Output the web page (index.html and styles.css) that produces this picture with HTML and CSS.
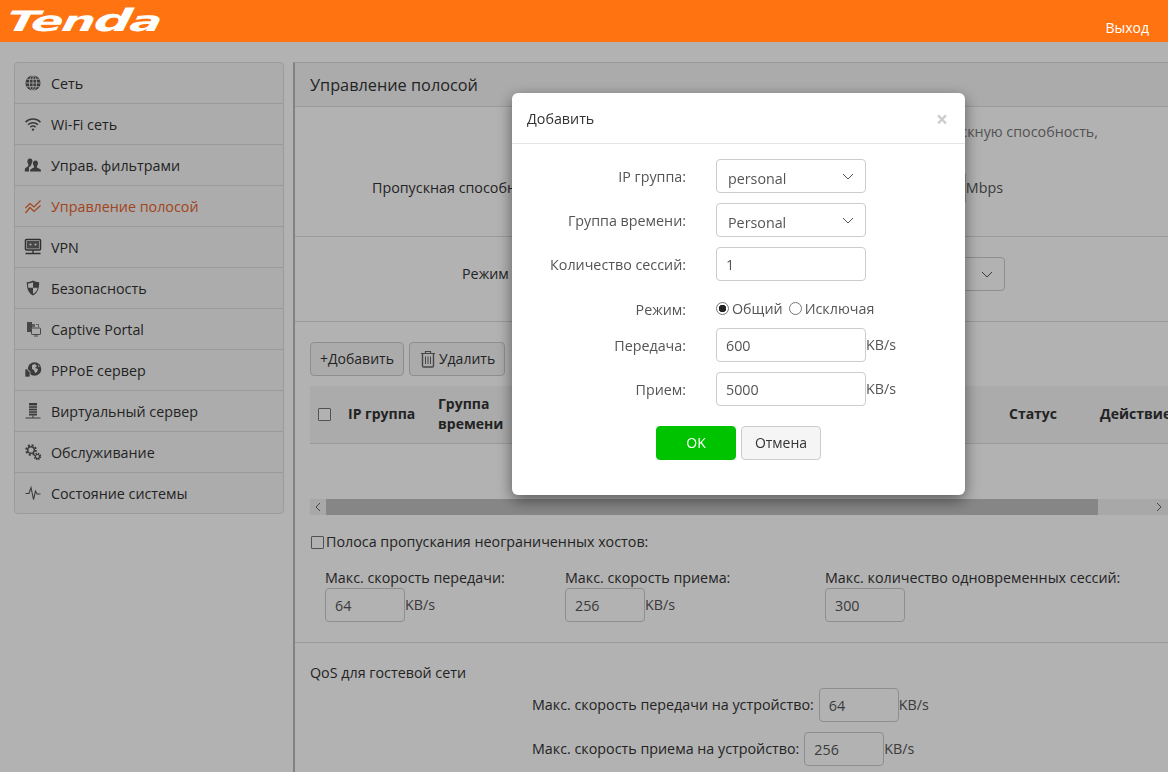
FILE: index.html
```html
<!DOCTYPE html>
<html lang="ru">
<head>
    <meta charset="UTF-8">
    <title>Tenda</title>
    <link rel="stylesheet" href="styles.css">
</head>
<body>
    <header class="top-bar">
        <div class="logo"><span class="logo-t">T</span>en<span class="logo-d">d</span>a</div>
        <a class="logout">Выход</a>
    </header>

    <div class="page">
        <nav class="side-nav">
            <a class="nav-item">
                <svg class="nav-icon" viewBox="0 0 18 18"><circle cx="9" cy="9" r="7.6" fill="#555"/><g fill="none" stroke="#f7f7f7" stroke-width=".8"><ellipse cx="9" cy="9" rx="3.6" ry="7.6"/><path d="M9 1.4v15.2M1.4 9h15.2M2.6 5.3h12.8M2.6 12.7h12.8"/></g></svg>
                Сеть
            </a>
            <a class="nav-item">
                <svg class="nav-icon" viewBox="0 0 18 18"><g fill="none" stroke="#555" stroke-width="1.5"><path d="M1.5 7.2a10.6 10.6 0 0 1 15 0"/><path d="M4 9.8a7 7 0 0 1 10 0"/><path d="M6.3 12.2a3.7 3.7 0 0 1 5.4 0"/></g><circle cx="9" cy="14.6" r="1.2" fill="#555"/></svg>
                Wi-Fi сеть
            </a>
            <a class="nav-item">
                <svg class="nav-icon" viewBox="0 0 18 18"><path fill="#555" d="M6 2.5c1.700 0 2.600 1.300 2.400 3-.1 1.200-.6 2.200-1.200 2.800v1.200L5 11.200 5 15.500H.8v-2.300c0-1.300 2.600-2.400 3.500-3.200V8.300C3.700 7.700 3.400 6.700 3.400 5.500c0-1.700 1-3 2.600-3z"/><path fill="#555" d="M11.500 4.500c1.800 0 2.700 1.400 2.500 3.100-.1 1.200-.6 2.100-1.100 2.700v1.300c1 .8 4.100 1.400 4.100 2.900v1h-11v-1c0-1.500 3-2.100 4-2.900v-1.300C9.500 9.700 9 8.800 8.900 7.600 8.700 5.900 9.700 4.500 11.500 4.500z"/></svg>
                Управ. фильтрами
            </a>
            <a class="nav-item is-active">
                <svg class="nav-icon" viewBox="0 0 18 18"><g fill="none" stroke="#e8622a" stroke-width="1.200"><path d="M1.500 11 6 6.500l4 3.500 6.500-6.500"/><path d="M1.500 16 6 10.500l4 4 6.500-6"/></g></svg>
                Управление полосой
            </a>
            <a class="nav-item">
                <svg class="nav-icon" viewBox="0 0 18 18"><rect x="1.500" y="1.500" width="15" height="10.500" rx="1" fill="none" stroke="#444" stroke-width="1.500"/><rect x="3" y="3" width="12" height="7.500" fill="#666"/><circle cx="6.500" cy="6.500" r="1.100" fill="#f7f7f7"/><circle cx="11.500" cy="6.500" r="1.100" fill="#f7f7f7"/><path d="M9 12v3M1.500 15.500h15" stroke="#444" stroke-width="1.300"/></svg>
                VPN
            </a>
            <a class="nav-item">
                <svg class="nav-icon" viewBox="0 0 18 18"><path fill="#555" d="M9 1.500c2 1.200 4 1.700 6.200 1.700 0 6.200-1.400 10.600-6.200 13.300C4.200 13.800 2.800 9.400 2.800 3.200 5 3.200 7 2.700 9 1.500z"/><path fill="#f7f7f7" d="M9 3.200v5.600H4.300c-.1-1.100-.2-2.200-.2-4.300C5.700 4.400 7.400 4 9 3.200zM9 8.800h4.700c-.5 2.800-2 4.900-4.700 6.200z"/></svg>
                Безопасность
            </a>
            <a class="nav-item">
                <svg class="nav-icon" viewBox="0 0 18 18"><path fill="#666" d="M3 2h5v10H3z"/><path fill="#888" d="M8 4h3v3H8z"/><rect x="7.500" y="8" width="9" height="6.500" rx=".6" fill="#f7f7f7" stroke="#666"/><path d="M10 16h4" stroke="#666"/><path fill="none" stroke="#888" d="M12 4.500h2.500V7"/></svg>
                Captive Portal
            </a>
            <a class="nav-item">
                <svg class="nav-icon" viewBox="0 0 18 18"><circle cx="10.500" cy="8" r="6.800" fill="#555"/><path fill="#f7f7f7" d="M8 4l3-1 2 2-2 2 3 1-1 3-2 1-1-3-2-1zM14 3.500l1.500 2-1 1z"/><path fill="#555" stroke="#f7f7f7" stroke-width=".7" d="M1 8h3v2h2v6H1z"/></svg>
                PPPoE сервер
            </a>
            <a class="nav-item">
                <svg class="nav-icon" viewBox="0 0 18 18"><rect x="5" y="1" width="8" height="12.500" fill="#555"/><path d="M5 3.800h8M5 6.300h8M5 8.800h8M5 11.300h8" stroke="#f7f7f7" stroke-width=".8"/><path d="M9 13.500v2.500M1.500 16h15" stroke="#555" stroke-width="1.100"/></svg>
                Виртуальный сервер
            </a>
            <a class="nav-item">
                <svg class="nav-icon" viewBox="0 0 18 18"><g fill="none" stroke="#555"><circle cx="7" cy="7" r="4.800" stroke-width="2" stroke-dasharray="2 1.770"/><circle cx="7" cy="7" r="3.300" stroke-width="1.500"/><circle cx="13.500" cy="13.500" r="2.900" stroke-width="1.600" stroke-dasharray="1.400 .88"/><circle cx="13.500" cy="13.500" r="2" stroke-width="1.100"/></g></svg>
                Обслуживание
            </a>
            <a class="nav-item">
                <svg class="nav-icon" viewBox="0 0 18 18"><path fill="none" stroke="#555" stroke-width="1.100" d="M1.500 9.500H5L7 3.500l2.500 12L11.500 7l1.500 3h3.500"/></svg>
                Состояние системы
            </a>
        </nav>

        <main class="content">
            <h2 class="panel-title">Управление полосой</h2>

            <section class="block block-bandwidth">
                <p class="hint">Укажите фактическую пропускную способность,</p>
                <div class="field-row bandwidth-row">
                    <label class="field-label">Пропускная способность:</label>
                    <span class="with-unit"><input class="text-input" value="100"><span class="unit">Mbps</span></span>
                </div>
            </section>

            <section class="block block-mode">
                <div class="field-row mode-row">
                    <label class="field-label">Режим QoS:</label>
                    <div class="select-box"><span>Ручной</span>
                        <svg class="chevron" viewBox="0 0 12 7"><path d="M1 1l5 5 5-5" fill="none" stroke="#555"/></svg>
                    </div>
                </div>
            </section>

            <div class="toolbar">
                <button class="btn">+Добавить</button>
                <button class="btn">
                    <svg class="trash" viewBox="0 0 16 18"><g fill="none" stroke="#666"><path d="M1 3.500h14M5.500 3V1.500h5V3" stroke-width="1.200"/><path d="M2.500 3.500v12.200c0 .7.500 1.300 1.300 1.300h8.400c.8 0 1.300-.6 1.300-1.300V3.500" stroke-width="1.400"/><path d="M5.500 6.500v7.500M8 6.500v7.500M10.500 6.500v7.500"/></g></svg>
                    Удалить
                </button>
            </div>

            <div class="table-wrap">
                <table class="rule-table">
                    <colgroup>
                        <col class="col-check"><col class="col-ip"><col class="col-time"><col class="col-session"><col class="col-mode"><col class="col-speed"><col class="col-speed"><col class="col-status"><col class="col-action">
                    </colgroup>
                    <thead>
                        <tr>
                            <th class="cell-check"><input type="checkbox" class="check"></th>
                            <th>IP группа</th>
                            <th>Группа времени</th>
                            <th>Сессии</th>
                            <th>Режим</th>
                            <th>Передача</th>
                            <th>Прием</th>
                            <th>Статус</th>
                            <th>Действие</th>
                        </tr>
                    </thead>
                </table>
            </div>

            <div class="scroll-bar">
                <span class="scroll-btn"><svg viewBox="0 0 6 10"><path d="M5 1 1 5l4 4" fill="none" stroke="#666"/></svg></span>
                <span class="scroll-thumb"></span>
                <span class="scroll-rest"><svg viewBox="0 0 6 10"><path d="M1 1l4 4-4 4" fill="none" stroke="#666"/></svg></span>
            </div>

            <label class="unlimited"><input type="checkbox" class="check">Полоса пропускания неограниченных хостов:</label>

            <div class="limit-cols">
                <div class="limit-col">
                    <div class="limit-label">Макс. скорость передачи:</div>
                    <span class="with-unit"><input class="text-input short" value="64"><span class="unit">KB/s</span></span>
                </div>
                <div class="limit-col limit-col-wide">
                    <div class="limit-label">Макс. скорость приема:</div>
                    <span class="with-unit"><input class="text-input short" value="256"><span class="unit">KB/s</span></span>
                </div>
                <div class="limit-col">
                    <div class="limit-label">Макс. количество одновременных сессий:</div>
                    <span class="with-unit"><input class="text-input short" value="300"></span>
                </div>
            </div>

            <div class="guest">
                <div class="guest-title">QoS для гостевой сети</div>
                <div class="guest-row">
                    <span class="guest-label">Макс. скорость передачи на устройство:</span>
                    <input class="text-input short" value="64"><span class="unit">KB/s</span>
                </div>
                <div class="guest-row">
                    <span class="guest-label">Макс. скорость приема на устройство:</span>
                    <input class="text-input short" value="256"><span class="unit">KB/s</span>
                </div>
            </div>
        </main>
    </div>

    <div class="overlay">
        <div class="modal">
            <div class="modal-head">
                <span class="modal-title">Добавить</span>
                <span class="modal-close">×</span>
            </div>
            <div class="modal-body">
                <div class="form-row">
                    <label class="form-label">IP группа:</label>
                    <div class="select-box"><span>personal</span>
                        <svg class="chevron" viewBox="0 0 12 7"><path d="M1 1l5 5 5-5" fill="none" stroke="#555"/></svg>
                    </div>
                </div>
                <div class="form-row">
                    <label class="form-label">Группа времени:</label>
                    <div class="select-box"><span>Personal</span>
                        <svg class="chevron" viewBox="0 0 12 7"><path d="M1 1l5 5 5-5" fill="none" stroke="#555"/></svg>
                    </div>
                </div>
                <div class="form-row">
                    <label class="form-label">Количество сессий:</label>
                    <input class="text-input" value="1">
                </div>
                <div class="form-row radio-row">
                    <label class="form-label">Режим:</label>
                    <label class="radio-item"><input type="radio" name="mode" class="radio" checked>Общий</label>
                    <label class="radio-item"><input type="radio" name="mode" class="radio">Исключая</label>
                </div>
                <div class="form-row">
                    <label class="form-label">Передача:</label>
                    <input class="text-input" value="600"><span class="unit">KB/s</span>
                </div>
                <div class="form-row">
                    <label class="form-label">Прием:</label>
                    <input class="text-input" value="5000"><span class="unit">KB/s</span>
                </div>
                <div class="modal-actions">
                    <button class="btn btn-ok">OK</button>
                    <button class="btn btn-cancel">Отмена</button>
                </div>
            </div>
        </div>
    </div>
</body>
</html>
```

FILE: styles.css
```css
* {
    box-sizing: border-box;
}

html, body {
    height: 100%;
}

body {
    margin: 0;
    overflow: hidden;
    background: #fff;
    color: #333;
    font-family: "Open Sans", "Noto Sans", sans-serif;
    font-size: 14.3px;
    line-height: 20px;
}

/* top bar stays above the dimmed layer */
.top-bar {
    position: relative;
    z-index: 20;
    display: flex;
    justify-content: space-between;
    height: 42px;
    padding: 0 19px 0 7px;
    background: #ff7310;
    overflow: hidden;
}

.logo {
    width: 100px;
    color: #fff;
    font-family: "DejaVu Sans", sans-serif;
    font-size: 28px;
    font-weight: bold;
    font-style: italic;
    line-height: 42px;
    letter-spacing: -1px;
    white-space: nowrap;
    transform: translateY(-1px) scaleX(1.7) skewX(-6deg);
    transform-origin: left center;
}

.logo-d {
    font-size: 31px;
}

.logout {
    padding-top: 18px;
    color: #fff;
    font-size: 14px;
}

.page {
    display: flex;
    height: 730px;
    padding: 20px 0 0 14px;
}

.side-nav {
    flex: none;
    align-self: flex-start;
    width: 270px;
    margin-right: 9px;
    border: 1px solid #ddd;
    border-radius: 4px;
    background: #f7f7f7;
}

.nav-item {
    display: flex;
    align-items: center;
    height: 41px;
    padding: 2px 0 0 9px;
    border-bottom: 1px solid #ddd;
    color: #333;
}

.nav-item:last-child {
    height: 40px;
    border-bottom: 0;
}

.nav-item.is-active {
    color: #e8622a;
}

.nav-icon {
    flex: none;
    width: 18px;
    height: 18px;
    margin: -3px 9px 0 0;
}

.content {
    flex: 1;
    min-width: 0;
    border-left: 2px solid #bbb;
    border-top: 1px solid #ddd;
}

.panel-title {
    height: 44px;
    margin: 0;
    padding-left: 15px;
    border-bottom: 1px solid #ddd;
    background: #f5f5f5;
    font-size: 16.3px;
    font-weight: normal;
    line-height: 44px;
}

.block {
    border-bottom: 1px solid #ddd;
}

.block-bandwidth {
    height: 130px;
    padding-top: 15px;
}

.block-mode {
    height: 85px;
    padding-top: 20px;
}

.hint {
    margin: 0;
    padding-right: 70px;
    color: #777;
    text-align: right;
}

.field-row {
    display: flex;
    justify-content: space-between;
    align-items: center;
    height: 34px;
}

.bandwidth-row {
    margin-top: 29px;
    padding: 0 165px 0 77px;
}

.mode-row {
    padding: 0 163px 0 167px;
}

.with-unit {
    display: flex;
    align-items: center;
}

.text-input {
    width: 150px;
    height: 34px;
    padding: 0 9px;
    border: 1px solid #ccc;
    border-radius: 4px;
    background: #fff;
    color: #555;
    font: inherit;
    outline: none;
}

.text-input.short {
    width: 80px;
}

.unit {
    color: #555;
}

.select-box {
    display: flex;
    justify-content: space-between;
    align-items: center;
    width: 150px;
    height: 34px;
    padding: 5px 11px 0;
    border: 1px solid #ccc;
    border-radius: 4px;
    background: #fff;
    color: #555;
}

.chevron {
    width: 12px;
    height: 7px;
    margin-top: -5px;
}

.toolbar {
    display: flex;
    gap: 5px;
    margin: 20px 0 10px 15px;
}

.btn {
    display: flex;
    align-items: center;
    height: 34px;
    padding: 0 9px;
    border: 1px solid #ccc;
    border-radius: 4px;
    background: #f5f5f5;
    color: #333;
    font: inherit;
    font-size: 14px;
}

.trash {
    width: 16px;
    height: 18px;
    margin: 0 3px 0 1px;
}

.table-wrap {
    height: 113px;
    margin-left: 15px;
    overflow: hidden;
}

.rule-table {
    width: 901px;
    table-layout: fixed;
    border-collapse: collapse;
}

.rule-table thead tr {
    height: 57px;
    border-bottom: 1px solid #ddd;
    background: #f5f5f5;
}

.rule-table th {
    padding: 0;
    font-weight: bold;
    font-size: 14px;
    text-align: left;
}

.col-check { width: 38px; }
.col-ip { width: 90px; }
.col-time { width: 100px; }
.col-session { width: 121px; }
.col-mode { width: 110px; }
.col-speed { width: 120px; }
.col-status { width: 91px; }
.col-action { width: 111px; }

.rule-table .cell-check {
    padding-left: 8px;
}

.check {
    appearance: none;
    display: block;
    flex: none;
    width: 13px;
    height: 13px;
    margin: 0;
    border: 1px solid #767676;
    border-radius: 1px;
    background: #fff;
}

.scroll-bar {
    display: flex;
    height: 16px;
    margin-left: 15px;
    background: #f1f1f1;
}

.scroll-btn,
.scroll-rest {
    display: flex;
    align-items: center;
    justify-content: center;
    width: 16px;
}

.scroll-rest {
    flex: 1;
    justify-content: flex-end;
    padding-right: 6px;
}

.scroll-bar svg {
    width: 6px;
    height: 10px;
}

.scroll-thumb {
    width: 772px;
    background: #c1c1c1;
}

.unlimited {
    display: flex;
    align-items: center;
    gap: 2px;
    margin: 17px 0 0 16px;
}

.limit-cols {
    display: flex;
    height: 54px;
    margin: 16px 0 20px 30px;
}

.limit-col {
    flex: none;
    width: 240px;
    white-space: nowrap;
}

.limit-col-wide {
    width: 260px;
}

.limit-label {
    height: 20px;
}

.guest {
    padding: 20px 0 0 15px;
    border-top: 1px solid #ddd;
}

.guest-title {
    height: 20px;
}

.guest-row {
    display: flex;
    align-items: center;
    height: 34px;
    margin: 5px 0 10px 222px;
}

.guest-row + .guest-row {
    margin-top: 0;
}

.guest-label {
    margin-right: 5px;
}

/* dim layer with the dialog */
.overlay {
    position: fixed;
    top: 0;
    left: 0;
    right: 0;
    bottom: 0;
    z-index: 10;
    padding-top: 93px;
    background: rgba(0, 0, 0, .3);
}

.modal {
    width: 453px;
    height: 402px;
    margin-left: 512px;
    border-radius: 6px;
    background: #fff;
    box-shadow: 0 5px 15px rgba(0, 0, 0, .5);
}

.modal-head {
    display: flex;
    justify-content: space-between;
    align-items: center;
    height: 51px;
    padding: 2px 17px 0 15px;
    border-bottom: 1px solid #e5e5e5;
}

.modal-close {
    color: #ccc;
    font-size: 21px;
    font-weight: bold;
    line-height: 20px;
}

.modal-body {
    padding-top: 15px;
}

.form-row {
    display: flex;
    align-items: center;
    height: 34px;
    margin-bottom: 10px;
    color: #555;
}

.form-label {
    width: 174px;
    margin-right: 30px;
    padding-top: 2px;
    text-align: right;
}

.radio-row {
    height: 27px;
    padding-top: 8px;
}

.radio-item {
    display: flex;
    align-items: center;
    gap: 3px;
    margin-right: 6px;
}

.radio {
    appearance: none;
    width: 13px;
    height: 13px;
    margin: 0;
    border: 1px solid #767676;
    border-radius: 50%;
    background: #fff;
}

.radio:checked {
    background: radial-gradient(circle, #222 0, #222 3.5px, #fff 4px);
}

.modal-actions {
    display: flex;
    gap: 5px;
    margin: 20px 0 0 144px;
}

.btn-ok,
.btn-cancel {
    justify-content: center;
    width: 80px;
}

.btn-ok {
    border-color: #00c300;
    background: #00c300;
    color: #fff;
}
```
